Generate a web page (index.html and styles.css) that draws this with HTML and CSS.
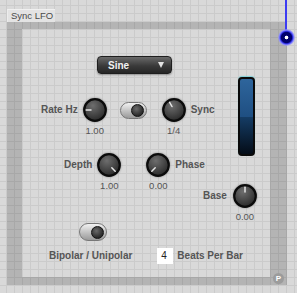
FILE: index.html
```html
<!DOCTYPE html>
<html lang="en">

<head>
    <meta charset="UTF-8">
    <meta name="viewport" content="width=device-width, initial-scale=1.0">
    <title>Sync LFO</title>
    <link rel="stylesheet" href="styles.css">
</head>

<body>

    <div class="tab">Sync LFO</div>

    <div class="panel">
        <div class="panelGrid">

            <div class="cellMenu">
                <div class="menu"><span>Sine</span><span class="arrow"></span></div>
            </div>

            <div class="row rowRate">
                <div class="ctl">
                    <span class="label">Rate Hz</span>
                    <div class="knobCol">
                        <svg class="knob" viewBox="0 0 24 24"><use href="#knobBody"/><line x1="8" y1="12" x2="3.2" y2="12"/></svg>
                        <span class="value">1.00</span>
                    </div>
                </div>
                <span class="toggle toggleSync"><span class="dot"></span></span>
                <div class="ctl ctlSync">
                    <div class="knobCol">
                        <svg class="knob" viewBox="0 0 24 24"><use href="#knobBody"/><line x1="10" y1="8.5" x2="7.6" y2="4.3"/></svg>
                        <span class="value">1/4</span>
                    </div>
                    <span class="label">Sync</span>
                </div>
            </div>

            <div class="row rowDepth">
                <div class="ctl">
                    <span class="label">Depth</span>
                    <div class="knobCol">
                        <svg class="knob" viewBox="0 0 24 24"><use href="#knobBody"/><line x1="14.8" y1="14.8" x2="18.2" y2="18.2"/></svg>
                        <span class="value">1.00</span>
                    </div>
                </div>
                <div class="ctl ctlPhase">
                    <div class="knobCol">
                        <svg class="knob" viewBox="0 0 24 24"><use href="#knobBody"/><line x1="9.2" y1="14.8" x2="5.8" y2="18.2"/></svg>
                        <span class="value">0.00</span>
                    </div>
                    <span class="label">Phase</span>
                </div>
            </div>

            <div class="side">
                <div class="meter"></div>
                <div class="ctl ctlBase">
                    <span class="label">Base</span>
                    <div class="knobCol">
                        <svg class="knob" viewBox="0 0 24 24"><use href="#knobBody"/><line x1="12" y1="8" x2="12" y2="3.2"/></svg>
                        <span class="value">0.00</span>
                    </div>
                </div>
            </div>

            <div class="row bottom">
                <div class="bipolar">
                    <span class="toggle toggleBipolar"><span class="dot"></span></span>
                    <span class="label">Bipolar / Unipolar</span>
                </div>
                <div class="beats">
                    <span class="numBox">4</span>
                    <span class="label">Beats Per Bar</span>
                </div>
            </div>

        </div>
        <span class="badge">P</span>
    </div>

    <div class="cord"></div>
    <div class="outlet"></div>

    <!-- shared knob body -->
    <svg class="defs" width="0" height="0">
        <defs>
            <radialGradient id="knobFill" cx="40%" cy="30%" r="75%">
                <stop offset="0" stop-color="#6e6e6e"/>
                <stop offset="1" stop-color="#262626"/>
            </radialGradient>
            <g id="knobBody">
                <circle cx="12" cy="12" r="10.8" fill="url(#knobFill)" stroke="#0b0b0b" stroke-width="2.2"/>
            </g>
        </defs>
    </svg>

</body>

</html>
```

FILE: styles.css
```css
html, body {
    margin: 0px;
    height: 100%;
}

body {
    background-color: #d9d9d9;
    background-image:
        linear-gradient(#cbcbcb 1px, transparent 1px),
        linear-gradient(90deg, #cbcbcb 1px, transparent 1px);
    background-size: 8px 8px;
    background-position: 6px 5px;
    font-family: 'Liberation Sans', Arial, sans-serif;
    color: #555;
    overflow: hidden;
}

.tab {
    box-sizing: border-box;
    margin: 9px 0px 0px 7px;
    width: 48px;
    height: 13px;
    padding-left: 3px;
    background: #e3e3e3;
    border-top: 1px solid #f0f0f0;
    border-left: 1px solid #ececec;
    font-size: 9.5px;
    line-height: 12px;
    color: #4a4a4a;
    white-space: nowrap;
}

.panel {
    position: relative;
    margin-left: 7px;
    width: 248px;
    height: 248px;
    border-style: solid;
    border-color: rgba(0, 0, 0, 0.17);
    border-width: 7px 17px 8px 15px;
}

.panelGrid {
    display: grid;
    grid-template-columns: 180px 68px;
    grid-template-rows: 69px 55px 70px 54px;
    height: 248px;
}

.label {
    font-size: 10px;
    font-weight: bold;
    line-height: 24px;
    color: #555;
    white-space: nowrap;
}

.value {
    font-size: 9.5px;
    line-height: 12px;
    margin-top: 3px;
    color: #555;
}

.cellMenu {
    grid-column: 1;
    grid-row: 1;
    padding: 27px 0px 0px 75px;
}

.menu {
    box-sizing: border-box;
    width: 75px;
    height: 18px;
    display: flex;
    justify-content: space-between;
    align-items: center;
    padding: 0px 7px 0px 10px;
    border-radius: 4px;
    border: 1px solid #1e1e1e;
    background: linear-gradient(#6a6a6a, #3a3a3a 55%, #262626);
    box-shadow: 0px 1px 2px rgba(0, 0, 0, 0.35);
    color: #f2f2f2;
    font-size: 10px;
    font-weight: bold;
}

.menu .arrow {
    width: 0px;
    height: 0px;
    border-left: 3.5px solid transparent;
    border-right: 3.5px solid transparent;
    border-top: 6px solid #e4e4e4;
}

.row {
    display: flex;
    align-items: flex-start;
}

.row > *, .ctl > * {
    flex-shrink: 0;
}

.rowRate {
    grid-column: 1;
    grid-row: 2;
    padding-left: 19px;
}

.rowDepth {
    grid-column: 1;
    grid-row: 3;
    padding-left: 42px;
}

.ctl {
    display: flex;
    align-items: flex-start;
    gap: 5px;
}

.knobCol {
    display: flex;
    flex-direction: column;
    align-items: center;
    width: 24px;
}

.knob {
    width: 24px;
    height: 24px;
    overflow: visible;
    filter: drop-shadow(0px 0px 1px rgba(0, 0, 0, 0.35));
}

.knob line {
    stroke: #e6e6e6;
    stroke-width: 1.5;
    stroke-linecap: round;
}

.toggle {
    box-sizing: border-box;
    display: flex;
    justify-content: flex-end;
    align-items: center;
    padding-right: 2px;
    border-radius: 9px;
    border: 1px solid #777;
    background: linear-gradient(#f2f2f2, #c4c4c4 50%, #9a9a9a);
}

.toggle .dot {
    box-sizing: border-box;
    width: 13px;
    height: 13px;
    border-radius: 50%;
    border: 1.5px solid #111;
    background: radial-gradient(circle at 40% 35%, #6a6a6a, #2a2a2a 70%);
}

.toggleSync {
    width: 27px;
    height: 17px;
    margin: 4px 0px 0px 13px;
}

.ctlSync {
    margin-left: 15px;
}

.ctlPhase {
    margin-left: 25px;
}

.side {
    grid-column: 2;
    grid-row: 1 / 4;
    display: flex;
    flex-direction: column;
}

.meter {
    box-sizing: border-box;
    width: 17px;
    height: 80px;
    margin: 48px 0px 0px 36px;
    border: 2px solid #0a0a0a;
    border-radius: 4px;
    background: linear-gradient(#2e659c, #1f4f82 50%, #153d66 50%, #040c17);
    box-shadow: 0px -1px 1px #7fd0d8;
}

.ctlBase {
    margin: 28px 0px 0px 1px;
    gap: 6px;
}

.bottom {
    grid-column: 1 / 3;
    grid-row: 4;
    padding-left: 27px;
}

.bipolar {
    display: flex;
    flex-direction: column;
    align-items: flex-start;
}

.toggleBipolar {
    width: 28px;
    height: 18px;
    margin-left: 30px;
}

.bipolar .label {
    line-height: 12px;
    margin-top: 9px;
}

.beats {
    display: flex;
    align-items: center;
    margin: 25px 0px 0px 25px;
}

.numBox {
    box-sizing: border-box;
    width: 16px;
    height: 16px;
    padding-left: 4px;
    background: white;
    font-size: 10px;
    line-height: 16px;
    color: #222;
}

.beats .label {
    margin-left: 4px;
    line-height: 16px;
}

.badge {
    position: absolute;
    right: -14px;
    bottom: -7px;
    width: 11px;
    height: 11px;
    border-radius: 50%;
    background: #9c9c9c;
    color: white;
    font-size: 8px;
    font-weight: bold;
    line-height: 11px;
    text-align: center;
}

.cord {
    position: absolute;
    left: 285px;
    top: 0px;
    width: 2px;
    height: 31px;
    background: #3b3bf2;
}

.outlet {
    position: absolute;
    left: 278px;
    top: 29px;
    width: 17px;
    height: 17px;
    border-radius: 50%;
    background: radial-gradient(circle, #fff 0px, #fff 1.5px, #00006c 2.2px, #00006c 5.2px, #2f2fe6 6.2px, #8c8cff 7.4px, rgba(150, 150, 255, 0.4) 8.5px);
}

.defs {
    position: absolute;
}
```
